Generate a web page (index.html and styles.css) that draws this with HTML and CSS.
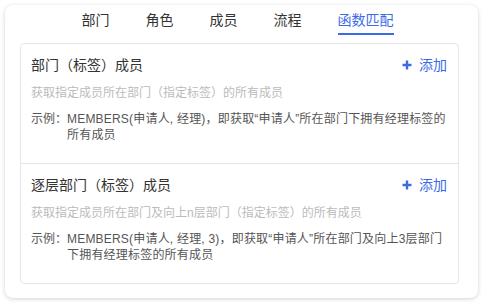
FILE: index.html
```html
<!doctype html>
<html lang="zh-CN">
<head>
	<meta charset="utf-8">
	<title>函数匹配</title>
	<link rel="stylesheet" href="styles.css">
</head>
<body>
	<div class="panel">
		<div class="tabs">
			<span class="tab">部门</span>
			<span class="tab">角色</span>
			<span class="tab">成员</span>
			<span class="tab">流程</span>
			<span class="tab active">函数匹配</span>
		</div>

		<div class="func-list">
			<div class="func">
				<div class="func-head">
					<span class="func-title">部门（标签）成员</span>
					<a class="func-add" href="#">
						<svg width="10" height="10" viewBox="0 0 10 10"><path d="M5 0.5v9M0.5 5h9" stroke="currentColor" stroke-width="2.4"/></svg>
						添加
					</a>
				</div>
				<div class="func-desc">获取指定成员所在部门（指定标签）的所有成员</div>
				<div class="func-example">
					<span class="label">示例：</span>
					<span class="text">MEMBERS(申请人, 经理)，即获取“申请人”所在部门下拥有经理标签的所有成员</span>
				</div>
			</div>
			<div class="func">
				<div class="func-head">
					<span class="func-title">逐层部门（标签）成员</span>
					<a class="func-add" href="#">
						<svg width="10" height="10" viewBox="0 0 10 10"><path d="M5 0.5v9M0.5 5h9" stroke="currentColor" stroke-width="2.4"/></svg>
						添加
					</a>
				</div>
				<div class="func-desc">获取指定成员所在部门及向上n层部门（指定标签）的所有成员</div>
				<div class="func-example">
					<span class="label">示例：</span>
					<span class="text">MEMBERS(申请人, 经理, 3)，即获取“申请人”所在部门及向上3层部门下拥有经理标签的所有成员</span>
				</div>
			</div>
		</div>
	</div>
</body>
</html>
```

FILE: styles.css
```css
* { box-sizing: border-box; }

html,
body {
	background: #fff;
	margin: 0;
	padding: 0;
}

body {
	padding: 5px;
	font-family: "Liberation Sans", "Noto Sans CJK SC", sans-serif;
	color: #333;
}

.panel {
	width: 473px;
	height: 293px;
	background: #fff;
	border-radius: 8px;
	box-shadow: 0 1px 4px rgba(0, 0, 0, 0.18);
	padding: 0 19px 0 15px;
}

.tabs {
	display: flex;
	justify-content: center;
	gap: 36px;
	padding-top: 5px;
	padding-right: 4px;
}

.tab {
	font-size: 14px;
	line-height: 20px;
	padding-bottom: 3px;
	border-bottom: 2px solid transparent;
	color: #333;
}

.tab.active {
	color: #3d6be6;
	border-bottom-color: #3d6be6;
}

.func-list {
	margin-top: 8px;
	border: 1px solid #e6e6e6;
	border-radius: 4px;
}

.func {
	padding: 11px 10px 20px;
}

.func + .func {
	border-top: 1px solid #e6e6e6;
}

.func-head {
	display: flex;
	justify-content: space-between;
	align-items: center;
	line-height: 20px;
}

.func-title {
	font-size: 14px;
	color: #333;
}

.func-add {
	display: flex;
	align-items: center;
	gap: 7px;
	font-size: 14px;
	color: #3d6be6;
	text-decoration: none;
	padding-right: 1px;
}

.func-desc {
	margin-top: 10px;
	font-size: 12px;
	line-height: 16px;
	color: #bbb;
}

.func-example {
	display: flex;
	margin-top: 10px;
	font-size: 12px;
	line-height: 16px;
	color: #555;
}

.func-example .label {
	flex: none;
	width: 36px;
}

.func-example .text {
	letter-spacing: 0.2px;
}
```
